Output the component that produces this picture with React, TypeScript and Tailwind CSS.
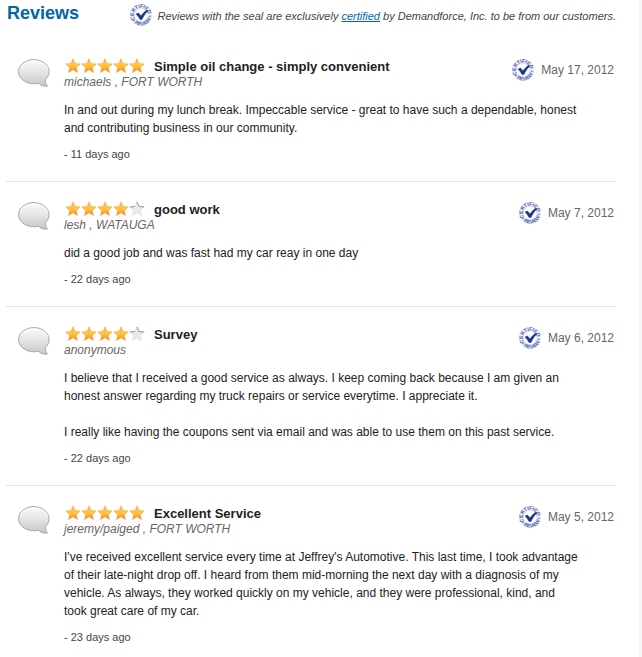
import React, { useId } from 'react';
import { clsx } from 'clsx';

interface Review {
  id: number;
  rating: number;
  title: string;
  author: string;
  date: string;
  age: string;
  body: string[];
}

const reviews: Review[] = [
  {
    id: 1,
    rating: 5,
    title: 'Simple oil change - simply convenient',
    author: 'michaels , FORT WORTH',
    date: 'May 17, 2012',
    age: '11 days ago',
    body: [
      'In and out during my lunch break. Impeccable service - great to have such a dependable, honest and contributing business in our community.',
    ],
  },
  {
    id: 2,
    rating: 4,
    title: 'good work',
    author: 'lesh , WATAUGA',
    date: 'May 7, 2012',
    age: '22 days ago',
    body: ['did a good job and was fast had my car reay in one day'],
  },
  {
    id: 3,
    rating: 4,
    title: 'Survey',
    author: 'anonymous',
    date: 'May 6, 2012',
    age: '22 days ago',
    body: [
      'I believe that I received a good service as always. I keep coming back because I am given an honest answer regarding my truck repairs or service everytime. I appreciate it.',
      'I really like having the coupons sent via email and was able to use them on this past service.',
    ],
  },
  {
    id: 4,
    rating: 5,
    title: 'Excellent Service',
    author: 'jeremy/paiged , FORT WORTH',
    date: 'May 5, 2012',
    age: '23 days ago',
    body: [
      "I've received excellent service every time at Jeffrey's Automotive. This last time, I took advantage of their late-night drop off. I heard from them mid-morning the next day with a diagnosis of my vehicle. As always, they worked quickly on my vehicle, and they were professional, kind, and took great care of my car.",
    ],
  },
];

const Seal = () => {
  const id = useId();
  return (
    <svg width="22" height="24" viewBox="0 0 44 48" className="shrink-0" role="img" aria-label="Certified review">
      <defs>
        <path id={`${id}-top`} d="M22 38.500 A14.5 14.5 0 0 1 22 9.500 A14.5 14.5 0 0 1 22 38.500" />
        <path id={`${id}-bottom`} d="M1 24 A21 21 0 0 0 43 24" />
      </defs>
      <circle cx="22" cy="24" r="21.5" fill="#f1f2fa" stroke="#ccd1e8" strokeWidth="1" />
      <circle cx="22" cy="24" r="13.5" fill="#fff" stroke="#c6cce5" strokeWidth="1" />
      <g fill="#4a5aad" fontFamily="Liberation Sans, Arial, sans-serif" fontSize="10" fontWeight="bold" textAnchor="middle">
        <text transform="rotate(-22 22 24)">
          <textPath href={`#${id}-top`} startOffset="50%">CERTIFIED</textPath>
        </text>
        <text transform="rotate(-16 22 24)">
          <textPath href={`#${id}-bottom`} startOffset="50%">• REVIEW •</textPath>
        </text>
      </g>
      <path d="M12 22 L17 20 L22 26 C25 21 29 17 34 14 L36 16 C31 20 27 26 24 33 L20 33 C18 29 15 25 12 22 Z" fill="#1d3589" stroke="#1d3589" strokeWidth="1" />
    </svg>
  );
};

const SpeechBubble = () => {
  const id = useId();
  return (
    <svg width="33" height="29" viewBox="0 0 33 29" className="mt-px shrink-0" aria-hidden="true">
      <defs>
        <linearGradient id={id} x1="0" y1="0" x2="0" y2="1">
          <stop offset="0" stopColor="#fafafa" />
          <stop offset="0.5" stopColor="#e4e4e4" />
          <stop offset="1" stopColor="#c6c6c6" />
        </linearGradient>
      </defs>
      <path
        d="M20.500 24.200 A15.300 12.100 0 1 1 27.500 20.500 C27.300 23.500 28 25.500 29.500 27 C26 27.600 22.500 26.500 20.500 24.200 Z"
        fill={`url(#${id})`}
        stroke="#a8a8a8"
        strokeWidth="1"
        strokeLinejoin="round"
      />
      <path d="M3 9 C5 4.500 10 2.200 16 2.200 C22 2.200 27.500 4.500 29.500 9" fill="none" stroke="#fff" strokeWidth="1" />
    </svg>
  );
};

const starPath = 'M8 .8 L10 5.500 L15.200 6 L11.300 9.400 L12.500 14.500 L8 11.800 L3.500 14.500 L4.700 9.400 L.8 6 L6 5.500 Z';

const Star = ({ filled }: { filled: boolean }) => {
  const id = useId();
  return (
    <svg width="16" height="16" viewBox="0 0 16 16" aria-hidden="true">
      <defs>
        <linearGradient id={id} x1="0" y1="0" x2="0" y2="1">
          <stop offset="0" stopColor="#ffb52c" />
          <stop offset="0.45" stopColor="#ffcb45" />
          <stop offset="1" stopColor="#ff8208" />
        </linearGradient>
      </defs>
      {filled ? (
        <path d={starPath} fill={`url(#${id})`} stroke="#f3a552" strokeWidth="0.6" strokeLinejoin="round" />
      ) : (
        <>
          <path d={starPath} fill="#e9e9e9" stroke="#dadada" strokeWidth="0.6" strokeLinejoin="round" />
          <path d="M8 .8 L10 5.500 L15.200 6 M.8 6 L6 5.500" fill="none" stroke="#8c8c8c" strokeWidth="0.9" />
        </>
      )}
    </svg>
  );
};

const ReviewItem = ({ review, last }: { review: Review; last: boolean }) => (
  <li className={clsx('flex items-start pt-[19px] pb-[19px] pl-[11px]', !last && 'border-b border-dotted border-[#ccc]')}>
    <SpeechBubble />
    <div className="ml-[13px] min-w-0 flex-1">
      <div className="flex items-start justify-between">
        <div>
          <div className="flex h-4 items-center gap-[9px] pl-px">
            <span className="flex" role="img" aria-label={`${review.rating} out of 5 stars`}>
              {[1, 2, 3, 4, 5].map((n) => (
                <Star key={n} filled={n <= review.rating} />
              ))}
            </span>
            <h2 className="pt-px text-[13px] leading-4 font-bold text-[#222]">{review.title}</h2>
          </div>
          <p className="text-[12px] leading-4 text-[#666] italic">{review.author}</p>
        </div>
        <div className="flex items-center gap-[7px] pr-0.5">
          <Seal />
          <span className="text-[12px] leading-4 text-[#666]">{review.date}</span>
        </div>
      </div>
      <div className="mt-[11px] mr-9 space-y-[18px] text-[12px] leading-[18px] text-[#222]">
        {review.body.map((text) => (
          <p key={text}>{text}</p>
        ))}
      </div>
      <p className="mt-[9px] text-[11px] leading-4 text-[#444]">- {review.age}</p>
    </div>
  </li>
);

export default function App() {
  return (
    <main className="min-h-screen border-r-[3px] border-[#f7f7f7] bg-white pr-[23px] pl-[7px] font-['Liberation_Sans',Arial,sans-serif]">
      <header className="flex items-start justify-between pt-[3px] pb-3">
        <h1 className="text-[18px] leading-5 font-bold text-[#0065a9]">Reviews</h1>
        <div className="flex items-center gap-[5px]">
          <Seal />
          <p className="pt-px text-[11px] leading-4 text-[#444] italic">
            Reviews with the seal are exclusively{' '}
            <a href="#certified" className="text-[#0065b3] underline">
              certified
            </a>{' '}
            by Demandforce, Inc. to be from our customers.
          </p>
        </div>
      </header>
      <ul>
        {reviews.map((review, i) => (
          <ReviewItem key={review.id} review={review} last={i === reviews.length - 1} />
        ))}
      </ul>
    </main>
  );
}
